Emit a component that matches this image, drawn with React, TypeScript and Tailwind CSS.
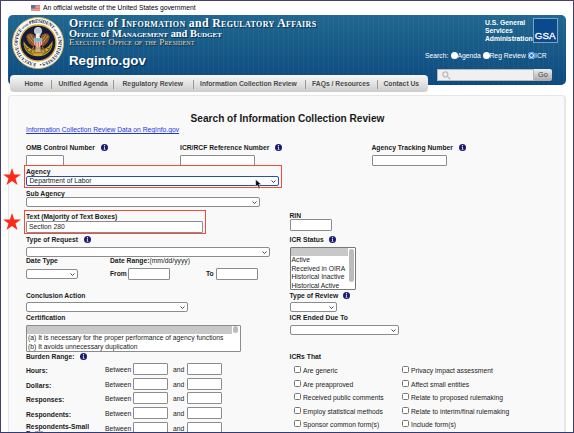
import React from "react";

type KidsProps = { children?: React.ReactNode; className?: string };

function Label({ children, className = "" }: KidsProps) {
  return <div className={`h-[9px] leading-[9px] font-bold whitespace-nowrap ${className}`}>{children}</div>;
}

function Info({ className = "" }: { className?: string }) {
  return (
    <svg viewBox="0 0 14 14" className={`inline-block size-[7px] align-[-1px] ${className}`}>
      <circle cx="7" cy="7" r="7" fill="#1b1b72" />
      <circle cx="7" cy="3.5" r="1.3" fill="#fff" />
      <path d="M5.6 5.8h2.4v4.4h.9v1.2H5.3v-1.2h1V7.1h-.7z" fill="#dfe0f2" />
    </svg>
  );
}

function Box({ children, className = "" }: KidsProps) {
  return (
    <div className={`shrink-0 rounded-[1px] border border-[#8c8c8c] bg-white leading-[9px] whitespace-nowrap ${className}`}>
      {children}
    </div>
  );
}

function Select({ children, className = "" }: KidsProps) {
  return (
    <div
      className={`flex h-[10px] shrink-0 items-center justify-between rounded-[2px] border bg-white pr-[2px] pl-[2.5px] leading-[8px] whitespace-nowrap ${className}`}
    >
      <span>{children}</span>
      <svg viewBox="0 0 10 6" className="h-[3px] w-[5px]">
        <path d="M1 1l4 4 4-4" fill="none" stroke="#333" strokeWidth="1.8" />
      </svg>
    </div>
  );
}

function Check({ children }: KidsProps) {
  return (
    <div className="flex h-[13.5px] items-center whitespace-nowrap">
      <span className="mr-[2px] size-[7px] shrink-0 rounded-[1.5px] border border-[#777] bg-white" />
      <span className="pt-[2px] leading-[9px]">{children}</span>
    </div>
  );
}

function Radio({ on = false }: { on?: boolean }) {
  return (
    <svg viewBox="0 0 14 14" className="size-[7px] shrink-0">
      <circle cx="7" cy="7" r="7" fill="#fff" />
      {on && <circle cx="7" cy="7" r="5.8" fill="#fff" stroke="#1673e6" strokeWidth="2" />}
      {on && <circle cx="7" cy="7" r="2.8" fill="#1673e6" />}
    </svg>
  );
}

function Star({ className }: { className: string }) {
  return (
    <svg viewBox="0 0 20 19" className={`absolute h-[17px] w-[18px] ${className}`}>
      <path d="M10 0l2.4 7.2H20l-6.1 4.5 2.3 7.3L10 14.5 3.8 19l2.3-7.3L0 7.2h7.6z" fill="#fb2b1a" />
    </svg>
  );
}

function Seal() {
  return (
    <svg viewBox="0 0 156 156" className="mt-[2px] size-[52px] shrink-0">
      <defs>
        <path id="ring" d="M78 139a61 61 0 1 1 .1 0" />
      </defs>
      <circle cx="78" cy="78" r="76.5" fill="#fff" stroke="#d2b65c" strokeWidth="3" />
      <text fontFamily="'Liberation Serif', serif" fontWeight="bold" fontSize="15" fill="#17182c">
        <textPath href="#ring" startOffset="6" textLength="372">
          EXECUTIVE OFFICE <tspan fontSize="8">OF THE</tspan> PRESIDENT <tspan fontSize="8">OF THE</tspan> UNITED STATES •
        </textPath>
      </text>
      <circle cx="78" cy="78" r="54" fill="#151a3c" stroke="#d0ad3c" strokeWidth="4" />
      <path d="M35 72c-4 26 17 46 43 46s47-20 43-46c-8 17-21 27-43 27s-35-10-43-27z" fill="#c9a827" />
      <path d="M38 85l9 17 17 10M118 85l-9 17-17 10M45 96l8-4M56 106l5-7M111 96l-8-4M100 106l-5-7" stroke="#5b511b" strokeWidth="3" fill="none" />
      <path d="M66 54c-10-8-20-5-23 4 1 13 8 24 22 31l5-8V60zM90 54c10-8 20-5 23 4-1 13-8 24-22 31l-5-8V60z" fill="#8b5727" />
      <path d="M48 57l17 22M55 53l13 21M108 57L91 79M101 53L88 74" stroke="#d3a34d" strokeWidth="2.5" />
      <path d="M66 90l-12 14M90 90l12 14M71 92l-5 15h24l-5-15z" stroke="#a66b2b" strokeWidth="4" fill="#bbb391" />
      <circle cx="78" cy="42" r="11" fill="#b9c6cb" stroke="#eee" strokeWidth="2" />
      <path d="M71 54q5-8 13-3l3 4-5 1 3 8H71z" fill="#f4f1e5" />
      <path d="M67 63h22v19q-4 9-11 12-7-3-11-12z" fill="#eee" />
      <path d="M67 63h22v10H67z" fill="#73b8dd" />
      <path d="M70 73v14M75 73v19M80 73v19M85 73v15" stroke="#dc5046" strokeWidth="2.6" />
    </svg>
  );
}

function Header() {
  return (
    <header className="mx-[8px] flex h-[70px] w-[558px] rounded-[5px] bg-[repeating-linear-gradient(90deg,rgba(255,255,255,0.035)_0px,rgba(255,255,255,0.035)_1px,transparent_1px,transparent_5px),linear-gradient(#20688f,#0d4a80)] pl-[4px] text-white">
      <Seal />
      <div className="ml-[5px] w-[340px] whitespace-nowrap font-['Liberation_Serif',serif] [text-shadow:1px_1px_1px_#06294c]">
        <div className="mt-[2px] h-[12px] text-[11.8px] leading-[12px] font-bold tracking-[0.34px] [font-variant:small-caps]">
          Office <span className="[font-variant:normal]">of</span> Information{" "}
          <span className="[font-variant:normal]">and</span> Regulatory Affairs
        </div>
        <div className="h-[9px] text-[10.4px] leading-[9px] font-bold [font-variant:small-caps]">
          Office <span className="[font-variant:normal]">of</span> Management{" "}
          <span className="[font-variant:normal]">and</span> Budget
        </div>
        <div className="h-[9px] text-[9px] leading-[9px] tracking-[0.15px] text-[#ecd3a4] [font-variant:small-caps]">
          Executive Office of the President
        </div>
        <div className="mt-[6px] font-['Liberation_Sans',Arial,sans-serif] text-[13.3px] leading-[16px] font-bold">
          Reginfo.gov
        </div>
      </div>
      <div className="w-[141px] whitespace-nowrap">
        <div className="ml-[76px] flex pt-[3px]">
          <div className="w-[50px] pt-[1px] leading-[8.1px] font-bold">
            U.S. General
            <br />
            Services
            <br />
            Administration
          </div>
          <div className="h-[25px] w-[25px] shrink-0 border border-[#7ba3c6] bg-[#0a4a8c] pt-[11px] text-center text-[9.8px] leading-[11px] font-normal [-webkit-text-stroke:0.3px_white]">
            GSA
          </div>
        </div>
        <div className="mt-[8px] ml-[16px] flex h-[9px] items-center leading-[9px]">
          <span className="w-[25.5px] shrink-0">Search:</span>
          <Radio />
          <span className="w-[25px] shrink-0">Agenda</span>
          <Radio />
          <span className="w-[38.5px] shrink-0">Reg Review</span>
          <Radio on />
          <span>ICR</span>
        </div>
        <div className="mt-[9px] ml-[28px] flex h-[12px] w-[115px]">
          <div className="w-[97px] border border-[#b8b8b8] bg-[#f0f0f0] pl-[4px]">
            <svg viewBox="0 0 24 24" className="mt-[1px] size-[9px]" fill="none" stroke="#bdbdbd" strokeWidth="3.5">
              <circle cx="9" cy="9" r="6.5" />
              <path d="M14 14l8 8" />
            </svg>
          </div>
          <div className="w-[18px] rounded-r-[2px] bg-linear-to-b from-[#eee] to-[#a9a9a9] text-center text-[7.4px] leading-[12px] text-[#444]">
            Go
          </div>
        </div>
      </div>
    </header>
  );
}

function Nav() {
  const item = "flex shrink-0 items-center before:h-[9px] before:w-px before:bg-[#999]";
  return (
    <nav className="relative -mt-[10px] ml-[10px] flex h-[17px] w-[418px] rounded-[4px] bg-linear-to-b from-[#f8f8f8] via-[#e3e3e3] to-[#cbcbcb] pt-px pl-[14.5px] font-bold whitespace-nowrap text-[#4b4b4b]">
      <span className="flex w-[26px] items-center">Home</span>
      <span className={`${item} w-[62px] before:mr-[7px]`}>Unified Agenda</span>
      <span className={`${item} w-[80px] before:mr-[9px]`}>Regulatory Review</span>
      <span className={`${item} w-[112px] before:mr-[6.5px]`}>Information Collection Review</span>
      <span className={`${item} w-[72px] before:mr-[6.5px]`}>FAQs / Resources</span>
      <span className={`${item} before:mr-[6px]`}>Contact Us</span>
    </nav>
  );
}

function BurdenRow({ children }: KidsProps) {
  return (
    <div className="flex h-[14.65px] whitespace-nowrap">
      <span className="w-[79px] pt-[4px] leading-[8px] font-bold">{children}</span>
      <span className="w-[28px] pt-[2px] leading-[9px]">Between</span>
      <Box className="h-[12px] w-[35px]" />
      <span className="w-[19px] pt-[2px] pl-[5px] leading-[9px]">and</span>
      <Box className="h-[12px] w-[35px]" />
    </div>
  );
}

function LeftColumn() {
  return (
    <div className="w-[263.5px] shrink-0">
      <div className="-ml-[2px] h-[24px] w-[182px] border border-[#f5493c] pt-px pl-px">
        <Label className="h-[8px] leading-[8px]">Text (Majority of Text Boxes)</Label>
        <Box className="h-[12px] w-[177px] pl-[2px] leading-[10px]">Section 280</Box>
      </div>
      <Label className="mt-px">
        Type of Request <Info className="ml-[4px]" />
      </Label>
      <Select className="mt-[3px] w-[244px] border-[#8c8c8c]" />
      <div className="-mt-px flex">
        <Label className="w-[84px]">Date Type</Label>
        <Label>
          Date Range:<span className="font-normal">(mm/dd/yyyy)</span>
        </Label>
      </div>
      <div className="mt-[3px] flex h-[12px] font-bold">
        <Select className="mt-[1px] w-[52px] border-[#8c8c8c]" />
        <span className="ml-[32px] w-[18px] pt-px leading-[9px]">From</span>
        <Box className="h-[12px] w-[42px]" />
        <span className="ml-[36px] w-[10px] pt-px leading-[9px]">To</span>
        <Box className="h-[12px] w-[42px]" />
      </div>
      <Label className="mt-[11px]">Conclusion Action</Label>
      <Select className="mt-[2px] w-[162px] border-[#8c8c8c]" />
      <Label className="mt-px">Certification</Label>
      <Box className="relative mt-[3px] h-[27px] w-[215px]">
        <div className="h-[8px] w-[205px] bg-[#c8c8c8]" />
        <div className="pl-px leading-[8.5px]">
          (a) It is necessary for the proper performance of agency functions
          <br />
          (b) It avoids unnecessary duplication
        </div>
        <span className="absolute top-0 right-[2px] h-[7px] w-[5px] rounded-full bg-[#bdbdbd]" />
      </Box>
      <Label>
        Burden Range: <Info className="ml-[4px]" />
      </Label>
      <div className="mt-[2px]">
        <BurdenRow>Hours:</BurdenRow>
        <BurdenRow>Dollars:</BurdenRow>
        <BurdenRow>Responses:</BurdenRow>
        <BurdenRow>Respondents:</BurdenRow>
        <BurdenRow>
          <span className="-mt-[3px] block leading-[7.5px]">
            Respondents-Small
            <br />
            Entities:
          </span>
        </BurdenRow>
      </div>
    </div>
  );
}

function RightColumn() {
  return (
    <div className="w-[260px]">
      <Label className="mt-px">RIN</Label>
      <Box className="-mt-px h-[12px] w-[42px]" />
      <Label className="mt-[4px]">
        ICR Status <Info className="ml-[3px]" />
      </Label>
      <Box className="relative mt-[3px] h-[43px] w-[66px] border-[#777]">
        <div className="h-[8px] w-[57px] bg-[#c8c8c8]" />
        <div className="pl-px leading-[8.5px]">
          Active
          <br />
          Received in OIRA
          <br />
          Historical Inactive
          <br />
          Historical Active
        </div>
        <span className="absolute top-px right-[1px] h-[33px] w-[5px] rounded-full bg-[#bcbcbc]" />
      </Box>
      <Label className="mt-px">
        Type of Review <Info className="ml-[3px]" />
      </Label>
      <Select className="mt-[2px] w-[47px] border-[#8c8c8c]" />
      <Label className="mt-px">ICR Ended Due To</Label>
      <Select className="mt-[3px] w-[109px] border-[#8c8c8c]" />
      <Label className="mt-[17px]">ICRs That</Label>
      <div className="mt-[2px] flex pl-[4.5px]">
        <div className="w-[108px]">
          <Check>Are generic</Check>
          <Check>Are preapproved</Check>
          <Check>Received public comments</Check>
          <Check>Employ statistical methods</Check>
          <Check>Sponsor common form(s)</Check>
        </div>
        <div>
          <Check>Privacy impact assessment</Check>
          <Check>Affect small entities</Check>
          <Check>Relate to proposed rulemaking</Check>
          <Check>Relate to interim/final rulemaking</Check>
          <Check>Include form(s)</Check>
        </div>
      </div>
    </div>
  );
}

export default function App() {
  return (
    <div className="relative h-[433px] w-[574px] overflow-hidden bg-white font-['Liberation_Sans',Arial,sans-serif] text-[6.75px] text-[#1b1b1b]">
      <div className="flex h-[15px] items-center pl-[31px] leading-[9px] whitespace-nowrap text-black">
        <svg viewBox="0 0 27 18" className="mr-[3px] h-[6px] w-[9px]">
          <path d="M0 0h27v18H0z" fill="#f5b0aa" />
          <path d="M0 1.5h27M0 6h27M0 10.5h27M0 15h27" stroke="#e4574e" strokeWidth="2" />
          <path d="M0 0h13v10H0z" fill="#5271b5" />
        </svg>
        An official website of the United States government
      </div>
      <Header />
      <Nav />
      <main className="mt-[3px] ml-[8px] h-[350px] w-[558px] rounded-[4px] border border-r-2 border-[#e6e8e8] bg-[#f9f9f9] pl-[17px]">
        <h1 className="mr-[15px] h-[29px] pt-[17px] text-center text-[10.12px] leading-[12px] font-bold text-[#1a1a1a]">
          Search of Information Collection Review
        </h1>
        <div className="h-[9px] leading-[9px] text-[#1f36d8] underline">
          Information Collection Review Data on RegInfo.gov
        </div>
        <div className="mt-[9px] flex">
          <div className="w-[154px]">
            <Label>
              OMB Control Number <Info className="ml-[4px]" />
            </Label>
            <Box className="mt-[3px] h-[11px] w-[38px]" />
          </div>
          <div className="w-[191.5px]">
            <Label>
              ICR/RCF Reference Number <Info className="ml-[4px]" />
            </Label>
            <Box className="mt-[3px] h-[11px] w-[75px]" />
          </div>
          <div>
            <Label>
              Agency Tracking Number <Info className="ml-[4px]" />
            </Label>
            <Box className="mt-[3px] h-[11px] w-[75px]" />
          </div>
        </div>
        <div className="relative -mt-px -ml-[2px] h-[23px] w-[258px] border border-[#f5493c] pt-px pl-px">
          <Label className="h-[8px] leading-[8px]">Agency</Label>
          <Select className="w-[253px] border-[#2450b4]">Department of Labor</Select>
        </div>
        <Label className="mt-px">Sub Agency</Label>
        <Select className="-mt-px w-[234px] border-[#8c8c8c]" />
        <div className="mt-[3px] flex">
          <LeftColumn />
          <RightColumn />
        </div>
      </main>
      <Star className="top-[168px] left-[3px]" />
      <Star className="top-[213px] left-[3px]" />
      <svg viewBox="0 0 12 18" className="absolute top-[179px] left-[255px] h-[10px] w-[7px]">
        <path d="M1 1v13l3-3 2.5 6 2.5-1-2.5-6H11z" fill="#000" stroke="#fff" strokeWidth="0.8" />
      </svg>
      <div className="pointer-events-none absolute inset-0 border border-[#4a4070] border-b-[#2f3b78]" />
    </div>
  );
}
